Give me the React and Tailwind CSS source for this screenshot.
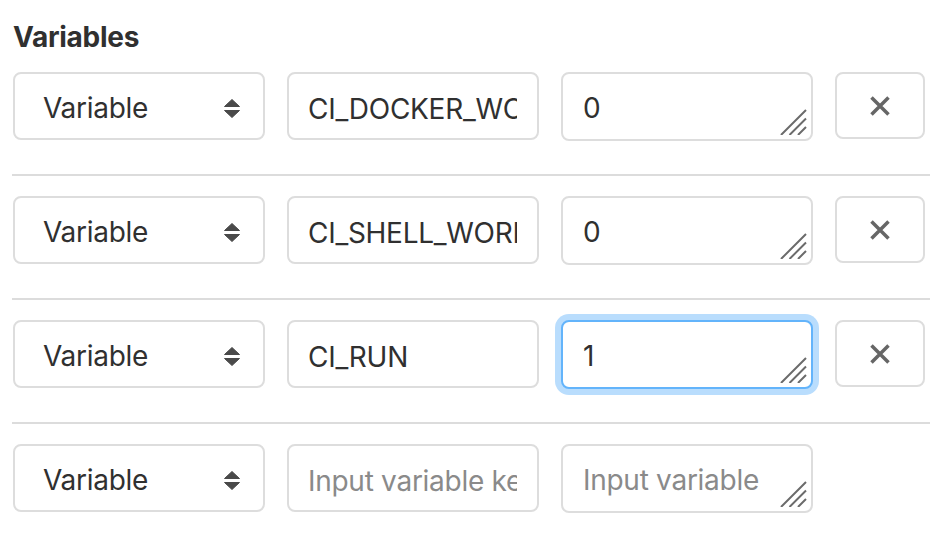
import React from 'react';

const rows = [
  { key: 'CI_DOCKER_WORKERS', value: '0' },
  { key: 'CI_SHELL_WORKERS', value: '0' },
  { key: 'CI_RUN', value: '1', focused: true },
  { key: '', value: '', isNew: true },
];

const font = { fontFamily: 'Inter, "Liberation Sans", Arial, sans-serif' };

const SortArrows = () => (
  <svg width="16" height="19" viewBox="0 0 16 19" className="shrink-0">
    <path d="M8 0.5 L15.5 7.5 L0.5 7.5 Z" fill="#4a4a4a" strokeLinejoin="round" stroke="#4a4a4a" strokeWidth="1" />
    <path d="M0.5 11.5 L15.5 11.5 L8 18.5 Z" fill="#4a4a4a" strokeLinejoin="round" stroke="#4a4a4a" strokeWidth="1" />
  </svg>
);

const ResizeHandle = () => (
  <svg
    width="27"
    height="26"
    viewBox="0 0 27 26"
    className="absolute right-[4px] bottom-[4px] pointer-events-none"
  >
    <path d="M1 26 L26 1 M9.5 26 L26 9.5 M18 26 L26 18" stroke="#6b6b6b" strokeWidth="2" />
  </svg>
);

const CloseIcon = () => (
  <svg width="22" height="22" viewBox="0 0 22 22">
    <path d="M2.5 2.5 L19.5 19.5 M19.5 2.5 L2.5 19.5" stroke="#666666" strokeWidth="3.5" />
  </svg>
);

const VariableRow = ({ row, last }) => (
  <div className={`pt-[20px] ${last ? '' : 'pb-[33px] border-b-2 border-[#dcdcdc]'}`}>
    <div className="flex gap-[22px] pl-px items-start">
      {/* type select */}
      <div className="w-[252px] h-[68px] border-2 border-[#dddddd] rounded-[8px] bg-white flex items-center justify-between pl-[28px] pr-[23px] pt-[4px]">
        <span className="text-[28px] text-[#303030] leading-[34px] tracking-[-0.01em]">Variable</span>
        <SortArrows />
      </div>

      {/* key */}
      <input
        readOnly
        value={row.key}
        placeholder="Input variable key"
        style={font}
        className="w-[252px] h-[68px] border-2 border-[#dddddd] rounded-[8px] bg-white pl-[19px] pr-[20px] pt-[5px] text-[28px] tracking-[-0.01em] text-[#303030] placeholder:text-[#8a8a8a] outline-none"
      />

      {/* value */}
      <div
        className={`relative w-[252px] h-[69px] rounded-[8px] border-2 bg-white px-[20px] pt-[17px] overflow-hidden ${
          row.focused ? 'border-[#63b4fb] shadow-[0_0_0_6px_#b9ddfd]' : 'border-[#dddddd]'
        }`}
      >
        <textarea
          readOnly
          value={row.value}
          placeholder="Input variable value"
          style={font}
          className="block w-full h-[34px] p-0 border-0 resize-none overflow-hidden bg-transparent text-[28px] leading-[34px] tracking-[-0.01em] text-[#303030] placeholder:text-[#8a8a8a] outline-none"
        />
        <ResizeHandle />
      </div>

      {/* remove */}
      {!row.isNew && (
        <button className="w-[90px] h-[67px] border-2 border-[#dddddd] rounded-[8px] bg-white flex items-center justify-center">
          <CloseIcon />
        </button>
      )}
    </div>
  </div>
);

export default function App() {
  return (
    <div className="w-[930px] h-[540px] bg-white pl-3 overflow-hidden" style={font}>
      <h2 className="mt-5 mb-[-2px] pl-px text-[28px] leading-[34px] font-bold tracking-[-0.01em] text-[#303030]">
        Variables
      </h2>
      {rows.map((row, i) => (
        <VariableRow key={i} row={row} last={i === rows.length - 1} />
      ))}
    </div>
  );
}
